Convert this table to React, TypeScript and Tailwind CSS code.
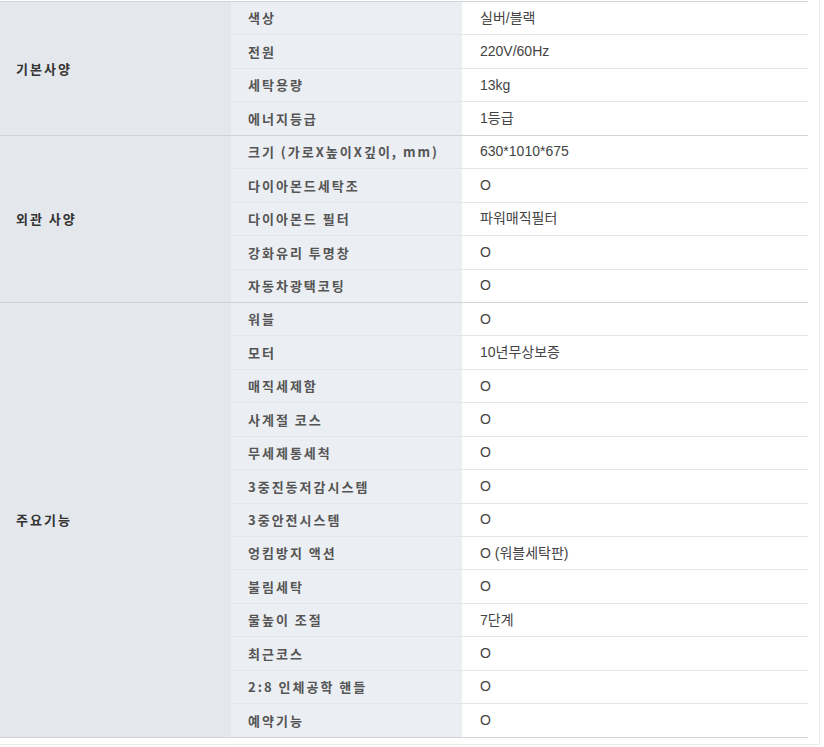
import React from 'react'

type Row = { label: string; value: string }
type Group = { title: string; rows: Row[] }

const groups: Group[] = [
  {
    title: '기본사양',
    rows: [
      { label: '색상', value: '실버/블랙' },
      { label: '전원', value: '220V/60Hz' },
      { label: '세탁용량', value: '13kg' },
      { label: '에너지등급', value: '1등급' },
    ],
  },
  {
    title: '외관 사양',
    rows: [
      { label: '크기 (가로X높이X깊이, mm)', value: '630*1010*675' },
      { label: '다이아몬드세탁조', value: 'O' },
      { label: '다이아몬드 필터', value: '파워매직필터' },
      { label: '강화유리 투명창', value: 'O' },
      { label: '자동차광택코팅', value: 'O' },
    ],
  },
  {
    title: '주요기능',
    rows: [
      { label: '워블', value: 'O' },
      { label: '모터', value: '10년무상보증' },
      { label: '매직세제함', value: 'O' },
      { label: '사계절 코스', value: 'O' },
      { label: '무세제통세척', value: 'O' },
      { label: '3중진동저감시스템', value: 'O' },
      { label: '3중안전시스템', value: 'O' },
      { label: '엉킴방지 액션', value: 'O (워블세탁판)' },
      { label: '불림세탁', value: 'O' },
      { label: '물높이 조절', value: '7단계' },
      { label: '최근코스', value: 'O' },
      { label: '2:8 인체공학 핸들', value: 'O' },
      { label: '예약기능', value: 'O' },
    ],
  },
]

const labelFont = { fontFamily: '"Noto Sans CJK KR", "Noto Sans", sans-serif' }
const valueFont = { fontFamily: '"Liberation Sans", "Noto Sans CJK KR", sans-serif' }

const SpecGroup = ({ group }: { group: Group }) => {
  return (
    <div className="flex">
      {/* group title */}
      <div className="w-[231px] shrink-0 bg-[#e4e7eb] border-b border-[#cfd3d7] flex items-center pl-4">
        <span className="text-[13px] font-bold tracking-[2px] text-[#333]">{group.title}</span>
      </div>
      <div className="flex-1 flex flex-col">
        {group.rows.map((row, i) => (
          <div
            key={row.label}
            className={
              'flex h-[33.45px] border-b ' +
              (i < group.rows.length - 1 ? 'border-[#e2e5e9]' : 'border-[#cfd3d7]')
            }
          >
            <div className="w-[231px] shrink-0 bg-[#ebeef2] flex items-center pl-[17px]">
              <span className="text-[13px] font-bold tracking-[2px] text-[#555] whitespace-nowrap">
                {row.label}
              </span>
            </div>
            <div className="flex-1 bg-white flex items-center pl-[18px]" style={valueFont}>
              <span className="text-[14px] text-[#444] whitespace-nowrap">{row.value}</span>
            </div>
          </div>
        ))}
      </div>
    </div>
  )
}

const App = () => {
  return (
    <div className="w-[824px] h-[747px] bg-white" style={labelFont}>
      <div className="w-[820px] h-[745px] bg-white border-r border-b border-[#ececec]">
        <div className="w-[808px] pt-px">
          <div className="border-t border-[#cfd3d7]">
            {groups.map((g) => (
              <SpecGroup key={g.title} group={g} />
            ))}
          </div>
        </div>
      </div>
    </div>
  )
}

export default App
